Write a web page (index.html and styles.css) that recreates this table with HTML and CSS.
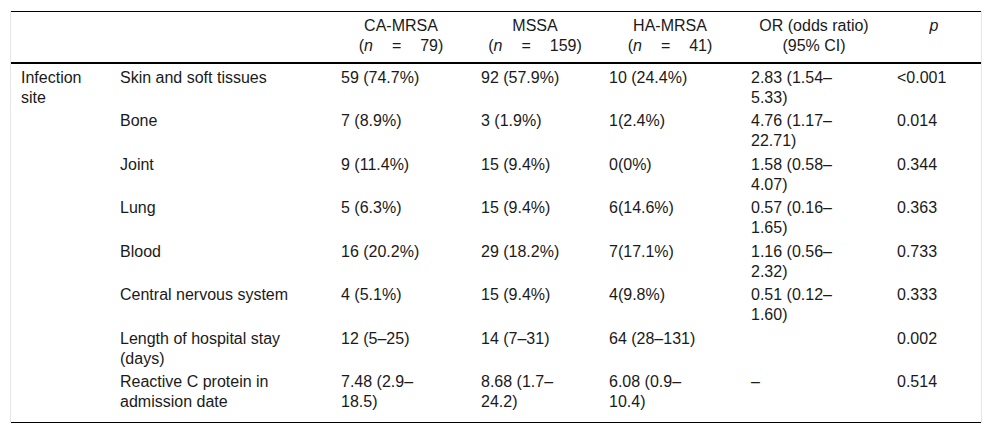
FILE: index.html
```html
<!DOCTYPE html>
<html>
<head>
<meta charset="utf-8">
<link rel="stylesheet" href="styles.css">
</head>
<body>
<div class="wrap">
<table class="tbl">
<colgroup>
<col class="c1"><col class="c2"><col class="c3"><col class="c4"><col class="c5"><col class="c6"><col class="c7">
</colgroup>
<thead>
<tr>
<th></th>
<th></th>
<th>CA-MRSA<br>(<i>n</i><span class="eq">=</span>79)</th>
<th>MSSA<br>(<i>n</i><span class="eq">=</span>159)</th>
<th>HA-MRSA<br>(<i>n</i><span class="eq">=</span>41)</th>
<th>OR (odds ratio)<br>(95% CI)</th>
<th><i>p</i></th>
</tr>
</thead>
<tbody>
<tr><td>Infection site</td><td>Skin and soft tissues</td><td>59 (74.7%)</td><td>92 (57.9%)</td><td>10 (24.4%)</td><td>2.83 (1.54–5.33)</td><td>&lt;0.001</td></tr>
<tr><td></td><td>Bone</td><td>7 (8.9%)</td><td>3 (1.9%)</td><td>1(2.4%)</td><td>4.76 (1.17–22.71)</td><td>0.014</td></tr>
<tr><td></td><td>Joint</td><td>9 (11.4%)</td><td>15 (9.4%)</td><td>0(0%)</td><td>1.58 (0.58–4.07)</td><td>0.344</td></tr>
<tr><td></td><td>Lung</td><td>5 (6.3%)</td><td>15 (9.4%)</td><td>6(14.6%)</td><td>0.57 (0.16–1.65)</td><td>0.363</td></tr>
<tr><td></td><td>Blood</td><td>16 (20.2%)</td><td>29 (18.2%)</td><td>7(17.1%)</td><td>1.16 (0.56–2.32)</td><td>0.733</td></tr>
<tr><td></td><td>Central nervous system</td><td>4 (5.1%)</td><td>15 (9.4%)</td><td>4(9.8%)</td><td>0.51 (0.12–1.60)</td><td>0.333</td></tr>
<tr><td></td><td>Length of hospital stay (days)</td><td>12 (5–25)</td><td>14 (7–31)</td><td>64 (28–131)</td><td></td><td>0.002</td></tr>
<tr class="last"><td></td><td>Reactive C protein in admission date</td><td>7.48 (2.9–18.5)</td><td>8.68 (1.7–24.2)</td><td>6.08 (0.9–10.4)</td><td>–</td><td>0.514</td></tr>
</tbody>
</table>
</div>
</body>
</html>
```

FILE: styles.css
```css
html, body {
  margin: 0;
  padding: 0;
  background: #fff;
}
body {
  font-family: "Liberation Sans", Arial, sans-serif;
  font-size: 16px;
  line-height: 20px;
  color: #1a1a1a;
}
.wrap {
  margin: 11px 10px 0 10px;
  border-left: 1px solid #e6e6e6;
  border-right: 1px solid #e6e6e6;
}
.tbl {
  width: 100%;
  table-layout: fixed;
  border-collapse: collapse;
  border-top: 1px solid #000;
  border-bottom: 1px solid #000;
}
.c1 { width: 99px; }
.c2 { width: 221px; }
.c3 { width: 140px; }
.c4 { width: 128px; }
.c5 { width: 142px; }
.c6 { width: 146px; }
.c7 { width: 94px; }
.tbl th {
  font-weight: normal;
  text-align: center;
  vertical-align: top;
  padding: 4px 10px 6px 10px;
  border-bottom: 2px solid #000;
}
.tbl td {
  text-align: left;
  vertical-align: top;
  padding: 3.5px 10px 0 10px;
}
.tbl td:nth-child(3),
.tbl td:nth-child(4),
.tbl td:nth-child(5),
.tbl td:nth-child(6) {
  padding-right: 35px;
}
.tbl tr.last td {
  padding-bottom: 10px;
}
.eq {
  display: inline-block;
  margin: 0 19px;
}
```
